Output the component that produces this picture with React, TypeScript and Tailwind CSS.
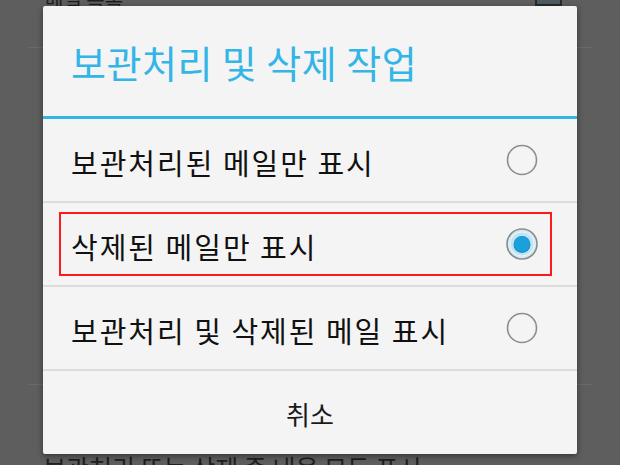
import React from "react";

const font = { fontFamily: '"Noto Sans CJK KR", "Noto Sans", sans-serif' };

function Radio({ checked }: { checked?: boolean }) {
  if (checked) {
    return (
      <svg width="32" height="32" viewBox="0 0 32 32">
        <circle cx="16" cy="16" r="15" fill="#d4ecf6" stroke="#8c8c8c" strokeWidth="1.6" />
        <circle cx="16" cy="16" r="12" fill="#c2e3f2" stroke="#e8f5fb" strokeWidth="1" />
        <circle cx="16" cy="16.5" r="8.5" fill="#1a8cc4" />
        <circle cx="16" cy="16" r="7.8" fill="#1aa0dc" />
      </svg>
    );
  }
  return (
    <svg width="32" height="32" viewBox="0 0 32 32">
      <circle cx="16" cy="16" r="14.5" fill="none" stroke="#8e8e8e" strokeWidth="1.6" />
    </svg>
  );
}

function Row({ label, checked, highlight }: { label: string; checked?: boolean; highlight?: boolean }) {
  return (
    <div className="relative flex h-[82px] items-center justify-between pl-[28px] pr-[39px]">
      <span className="pt-[4px] text-[29px] leading-none tracking-[2px] text-[#111111]" style={font}>
        {label}
      </span>
      <Radio checked={checked} />
      {highlight && (
        <div className="pointer-events-none absolute left-[16px] right-[25px] top-[9px] bottom-[9px] border-2 border-[#ff1a1a]" />
      )}
    </div>
  );
}

export default function App() {
  return (
    <div className="relative h-[465px] w-[620px] overflow-hidden bg-[#5e5e5e]" style={font}>
      {/* dimmed underlying page */}
      <div className="flex h-full flex-col">
        <div className="mx-[28px] flex h-[48px] items-start justify-between border-b border-[#6a6a6a]">
          <span className="-mt-[10px] ml-[17px] text-[20px] leading-none text-[#1e1e1e]">메일 목록</span>
          <div className="-mt-[21px] mr-[30px] h-[27px] w-[27px] border-2 border-[#2a2a2a] bg-[#4f5a60]" />
        </div>
        <div className="flex-1" />
        <div className="mx-[28px] h-[71px] border-t border-[#6a6a6a]" />
        <div className="h-[10px] overflow-visible">
          <span className="ml-[43px] block text-[25px] leading-none text-[#1e1e1e]">
            보관처리 또는 삭제 중 내용 모두 표시
          </span>
        </div>
      </div>

      {/* dialog */}
      <div className="absolute left-[43px] top-[6px] flex h-[448px] w-[534px] flex-col rounded-[2px] bg-[#f4f4f4] shadow-[0_2px_6px_rgba(0,0,0,0.45)]">
        <div className="flex h-[110px] items-center pl-[28px] pt-[2px]">
          <span className="text-[38px] leading-none tracking-[0.5px] text-[#33b5e5]">보관처리 및 삭제 작업</span>
        </div>
        <div className="h-[3px] bg-[#33b5e5]" />
        <Row label="보관처리된 메일만 표시" />
        <div className="h-[2px] bg-[#dcdcdc]" />
        <Row label="삭제된 메일만 표시" checked highlight />
        <div className="h-[2px] bg-[#dcdcdc]" />
        <Row label="보관처리 및 삭제된 메일 표시" />
        <div className="h-[2px] bg-[#dcdcdc]" />
        <div className="flex flex-1 items-center justify-center pt-[2px]">
          <span className="text-[26px] leading-none text-[#1a1a1a]">취소</span>
        </div>
      </div>
    </div>
  );
}
